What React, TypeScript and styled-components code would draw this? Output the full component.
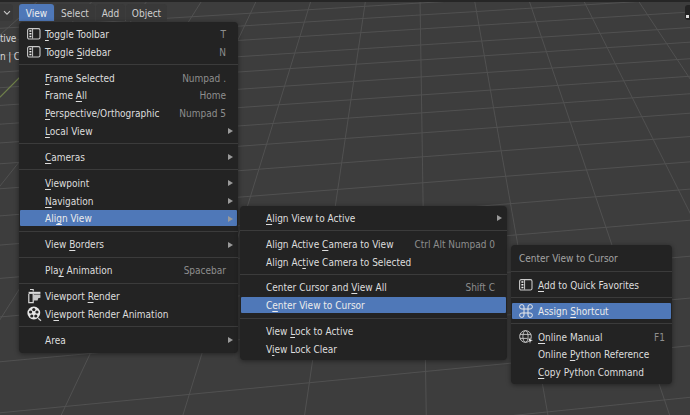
import React from "react";
import styled, { createGlobalStyle } from "styled-components";

const Global = createGlobalStyle`
  html, body { margin: 0; padding: 0; background: #3d3d3d; }
`;

const Screen = styled.div`
  position: relative;
  width: 690px;
  height: 415px;
  overflow: hidden;
  background: #3d3d3d;
  font-family: "DejaVu Sans Condensed", "DejaVu Sans", sans-serif;
  font-stretch: condensed;
  font-size: 10px;
  color: #dedede;
`;

const GridSvg = styled.svg`
  position: absolute;
  inset: 0;
`;

const TopStrip = styled.div`
  position: relative;
  height: 2px;
  background: #262626;
`;

const Header = styled.div`
  position: relative;
  display: flex;
  gap: 1px;
  height: 17px;
  padding-top: 2px;
`;

const HeaderButton = styled.div<{ $active?: boolean; $w: number }>`
  display: flex;
  align-items: center;
  justify-content: center;
  width: ${(p) => p.$w}px;
  padding-top: 1px;
  box-sizing: border-box;
  border-radius: 3px 3px 0 0;
  background: ${(p) => (p.$active ? "#4f78b8" : "#393939")};
  color: ${(p) => (p.$active ? "#eeeeee" : "#cfcfcf")};
`;

const ModeDrop = styled(HeaderButton)`
  border-radius: 0 3px 3px 0;
  margin-right: 5px;
`;

const HudText = styled.div<{ $y: number }>`
  position: absolute;
  left: 0;
  top: ${(p) => p.$y}px;
  color: #d8d8d8;
  line-height: 14px;
  letter-spacing: -0.2px;
  white-space: pre;
`;

const Corner = styled.div`
  position: absolute;
  left: 685px;
  top: 5px;
  width: 8px;
  height: 15px;
  border-radius: 3px;
  background: #232323;
`;

const CornerMark = styled.div`
  position: absolute;
  left: 1px;
  top: 10px;
  width: 3px;
  height: 3px;
  background: #dcdcdc;
`;

const Row = styled.div<{ $hot?: boolean }>`
  flex: none;
  display: flex;
  align-items: center;
  box-sizing: border-box;
  height: 15.8px;
  margin: 1px;
  padding-right: 4px;
  padding-top: 1px;
  border-radius: 1px;
  background: ${(p) => (p.$hot ? "#4f78b8" : "transparent")};
  color: ${(p) => (p.$hot ? "#ececec" : "#dedede")};
  white-space: nowrap;
`;

const IconSlot = styled.div`
  flex: none;
  display: flex;
  align-items: center;
  width: 25px;
  height: 15px;
  padding-left: 7px;
  box-sizing: border-box;
`;

const Menu = styled.div`
  position: absolute;
  display: flex;
  flex-direction: column;
  box-sizing: border-box;
  border-radius: 4px;
  background: #232323;
  box-shadow: 0 1px 5px rgba(0, 0, 0, 0.45);
`;

const MainMenu = styled(Menu)`
  left: 19px;
  top: 22px;
  width: 219px;
  padding: 3px 0 4px;
`;

const AlignMenu = styled(Menu)`
  left: 240px;
  top: 206px;
  width: 267px;
  padding: 3px 0 2px;
`;

const ContextMenu = styled(Menu)`
  left: 511px;
  top: 245px;
  width: 161px;
  padding: 5px 0 3px;
  ${IconSlot} {
    width: 26px;
  }
`;

const Label = styled.span`
  flex: 1;
`;

const Mn = styled.span`
  text-decoration: underline;
  text-underline-offset: 1.5px;
  text-decoration-thickness: 1px;
`;

const Shortcut = styled.span<{ $tight?: boolean }>`
  color: #8e8e8e;
  margin-right: ${(p) => (p.$tight ? 2 : 7)}px;
`;

const Arrow = styled.span`
  width: 0;
  height: 0;
  border-left: 5px solid #9a9a9a;
  border-top: 3.5px solid transparent;
  border-bottom: 3.5px solid transparent;
`;

const Sep = styled.div`
  flex: none;
  display: flex;
  align-items: center;
  height: 8.1px;
`;

const SepLine = styled.div`
  flex: 1;
  height: 1px;
  background: #3b3b3b;
`;

const Title = styled.div`
  flex: none;
  height: 17.8px;
  line-height: 18.8px;
  padding-left: 8px;
  color: #a3a3a3;
`;

const Divider = () => (
  <Sep>
    <SepLine />
  </Sep>
);

const PanelIcon = () => (
  <svg width="14" height="12" viewBox="0 0 14 12">
    <rect x="0.6" y="0.6" width="12.4" height="10.4" rx="1.6" fill="none" stroke="#c9c9c9" strokeWidth="1.1" />
    <path d="M5.6 1v9.6" stroke="#c9c9c9" strokeWidth="1" />
    <path d="M2.4 3h2M2.4 5.8h2M2.4 8.6h2" stroke="#f2f2f2" strokeWidth="1.5" />
  </svg>
);

const RenderIcon = () => (
  <svg width="15" height="16" viewBox="0 0 15 16" style={{ marginTop: -2 }}>
    <path d="M3 1.5h3.2v2" fill="none" stroke="#d8d8d8" strokeWidth="1.1" />
    <path d="M1.6 3.8h11.8v2.1H1.6z" fill="#dcdcdc" />
    <path d="M1.8 6v8.6h4.4V6" fill="none" stroke="#d8d8d8" strokeWidth="1.2" />
    <path d="M6.2 6.4h7.2v3.4l-2.2.5-.6 2.3H7l-.8 1.6z" fill="#c8c8c8" />
  </svg>
);

const ReelIcon = () => (
  <svg width="15" height="16" viewBox="0 0 15 16">
    <circle cx="6.8" cy="7" r="6.4" fill="#e6e6e6" />
    <circle cx="6.8" cy="3.6" r="1.6" fill="#232323" />
    <circle cx="3.6" cy="6" r="1.6" fill="#232323" />
    <circle cx="10" cy="6" r="1.6" fill="#232323" />
    <circle cx="4.8" cy="10" r="1.6" fill="#232323" />
    <circle cx="8.8" cy="10" r="1.6" fill="#232323" />
    <path d="M11.2 12.2l2.8 2.6" stroke="#cfcfcf" strokeWidth="1.2" />
  </svg>
);

const CommandIcon = () => (
  <svg width="14" height="14" viewBox="0 0 14 14" style={{ marginTop: -1 }}>
    <path
      d="M5 5h4v4H5zM5 5V3A2.2 2.2 0 1 0 3 5H5M9 5V3A2.2 2.2 0 1 1 11 5H9M9 9h2A2.2 2.2 0 1 1 9 11V9M5 9H3A2.2 2.2 0 1 0 5 11V9"
      fill="none"
      stroke="#eaeaea"
      strokeWidth="1"
    />
  </svg>
);

const GlobeIcon = () => (
  <svg width="15" height="15" viewBox="0 0 15 15">
    <circle cx="6.5" cy="6.5" r="5.8" fill="none" stroke="#c8c8c8" strokeWidth="1" />
    <ellipse cx="6.5" cy="6.5" rx="2.6" ry="5.8" fill="none" stroke="#c8c8c8" strokeWidth="0.9" />
    <path d="M1 4.4h11M1 8.4h11" stroke="#c8c8c8" strokeWidth="0.9" />
    <path d="M8.8 7.8l5.4 2.6-2.3.8-.9 2.6z" fill="#f4f4f4" stroke="#232323" strokeWidth="0.5" />
  </svg>
);

const ChevronIcon = () => (
  <svg width="8" height="6" viewBox="0 0 8 6">
    <path d="M1 1.2l3 3 3-3" fill="none" stroke="#c8c8c8" strokeWidth="1.1" />
  </svg>
);

const hLines = [3, 15, 29, 45, 60, 77, 95, 113, 133, 157, 183, 211, 243, 280, 323, 372, 425];
const vLines = Array.from({ length: 34 }, (_, i) => i - 24);
const vx = (i: number, y: number) => 415 + (0.015 + i * 0.162) * (y + 336);
const hy = (y0: number, x: number) => y0 - (0.06 + y0 * 0.0001) * (x - 420);

const Grid = () => (
  <GridSvg width="690" height="415" viewBox="0 0 690 415">
    {vLines.map((i) => (
      <line key={i} x1={vx(i, 0)} y1={0} x2={vx(i, 415)} y2={415} stroke="#515151" strokeWidth="1" />
    ))}
    {hLines.map((y) => (
      <line key={y} x1={0} y1={hy(y, 0)} x2={690} y2={hy(y, 690)} stroke="#515151" strokeWidth="1" />
    ))}
    <line x1={0} y1={97} x2={30} y2={67} stroke="#6f8048" strokeWidth="1.1" />
  </GridSvg>
);

type ItemProps = {
  icon?: React.ReactNode;
  hot?: boolean;
  keys?: string;
  tight?: boolean;
  sub?: boolean;
  children: React.ReactNode;
};

const Item = ({ icon, hot, keys, tight, sub, children }: ItemProps) => (
  <Row $hot={hot}>
    <IconSlot>{icon}</IconSlot>
    <Label>{children}</Label>
    {keys && <Shortcut $tight={tight}>{keys}</Shortcut>}
    {sub && <Arrow />}
  </Row>
);

export default function App() {
  return (
    <>
      <Global />
      <Screen>
        <Grid />
        <TopStrip />
        <Header>
          <ModeDrop $w={13}>
            <ChevronIcon />
          </ModeDrop>
          <HeaderButton $active $w={35}>View</HeaderButton>
          <HeaderButton $w={40}>Select</HeaderButton>
          <HeaderButton $w={29}>Add</HeaderButton>
          <HeaderButton $w={41}>Object</HeaderButton>
        </Header>
        <HudText $y={32}>tive</HudText>
        <HudText $y={50}>{"n | Cu"}</HudText>
        <Corner>
          <CornerMark />
        </Corner>

        <MainMenu>
          <Item icon={<PanelIcon />} keys="T"><Mn>T</Mn>oggle Toolbar</Item>
          <Item icon={<PanelIcon />} keys="N">Toggle <Mn>S</Mn>idebar</Item>
          <Divider />
          <Item keys="Numpad ."><Mn>F</Mn>rame Selected</Item>
          <Item keys="Home">Frame <Mn>A</Mn>ll</Item>
          <Item keys="Numpad 5"><Mn>P</Mn>erspective/Orthographic</Item>
          <Item sub><Mn>L</Mn>ocal View</Item>
          <Divider />
          <Item sub><Mn>C</Mn>ameras</Item>
          <Divider />
          <Item sub><Mn>V</Mn>iewpoint</Item>
          <Item sub><Mn>N</Mn>avigation</Item>
          <Item sub hot>Ali<Mn>g</Mn>n View</Item>
          <Divider />
          <Item sub>View <Mn>B</Mn>orders</Item>
          <Divider />
          <Item keys="Spacebar">Pla<Mn>y</Mn> Animation</Item>
          <Divider />
          <Item icon={<RenderIcon />}>Viewport <Mn>R</Mn>ender</Item>
          <Item icon={<ReelIcon />}>Vi<Mn>e</Mn>wport Render Animation</Item>
          <Divider />
          <Item sub>Area</Item>
        </MainMenu>

        <AlignMenu>
          <Item sub><Mn>A</Mn>lign View to Active</Item>
          <Divider />
          <Item keys="Ctrl Alt Numpad 0">Align Active <Mn>C</Mn>amera to View</Item>
          <Item>Align Ac<Mn>t</Mn>ive Camera to Selected</Item>
          <Divider />
          <Item keys="Shift C">Center Cursor and <Mn>V</Mn>iew All</Item>
          <Item hot>C<Mn>e</Mn>nter View to Cursor</Item>
          <Divider />
          <Item>View <Mn>L</Mn>ock to Active</Item>
          <Item>V<Mn>i</Mn>ew Lock Clear</Item>
        </AlignMenu>

        <ContextMenu>
          <Title>Center View to Cursor</Title>
          <Divider />
          <Item icon={<PanelIcon />}><Mn>A</Mn>dd to Quick Favorites</Item>
          <Divider />
          <Item icon={<CommandIcon />} hot>Assign <Mn>S</Mn>hortcut</Item>
          <Divider />
          <Item icon={<GlobeIcon />} keys="F1" tight><Mn>O</Mn>nline Manual</Item>
          <Item>Online <Mn>P</Mn>ython Reference</Item>
          <Item><Mn>C</Mn>opy Python Command</Item>
        </ContextMenu>
      </Screen>
    </>
  );
}
